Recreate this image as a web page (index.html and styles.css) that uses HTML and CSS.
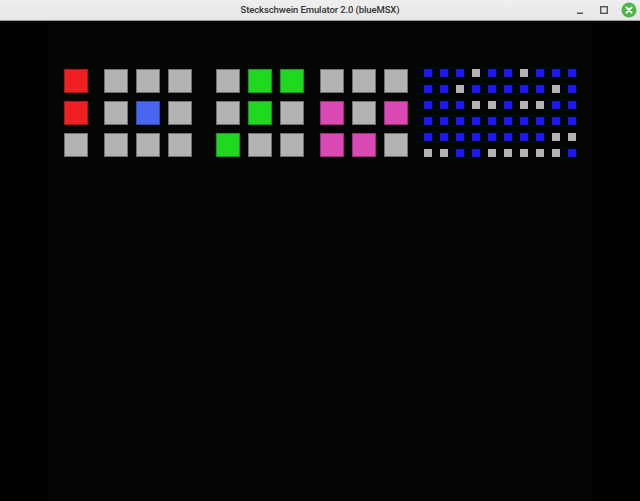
FILE: index.html
```html
<!DOCTYPE html>
<html>
<head>
<meta charset="utf-8">
<link rel="stylesheet" href="styles.css">
</head>
<body>
<div class="titlebar">
  <span class="title">Steckschwein Emulator 2.0 (blueMSX)</span>
  <div class="controls">
    <svg class="ctl" width="14" height="14" viewBox="0 0 14 14"><rect x="4" y="9.5" width="6" height="1.5" fill="#555"/></svg>
    <svg class="ctl" width="14" height="14" viewBox="0 0 14 14"><rect x="3.7" y="3.7" width="6.6" height="6.6" fill="none" stroke="#555" stroke-width="1.4"/></svg>
    <svg class="ctl close" width="16" height="16" viewBox="0 0 16 16"><circle cx="8" cy="8" r="7.5" fill="#4cb648"/><path d="M5.4 5.4 L10.6 10.6 M10.6 5.4 L5.4 10.6" stroke="#fff" stroke-width="2" stroke-linecap="round"/></svg>
  </div>
</div>
<div class="screen">
  <div class="border"></div>
  <div class="display">
    <div class="board">
      <div class="group g1"><div class="c r"></div><div class="c r"></div><div class="c"></div></div>
      <div class="group g3 sp16">
        <div class="c"></div><div class="c"></div><div class="c"></div>
        <div class="c"></div><div class="c b"></div><div class="c"></div>
        <div class="c"></div><div class="c"></div><div class="c"></div>
      </div>
      <div class="group g3 sp24">
        <div class="c"></div><div class="c g"></div><div class="c g"></div>
        <div class="c"></div><div class="c g"></div><div class="c"></div>
        <div class="c g"></div><div class="c"></div><div class="c"></div>
      </div>
      <div class="group g3 sp16">
        <div class="c"></div><div class="c"></div><div class="c"></div>
        <div class="c m"></div><div class="c"></div><div class="c m"></div>
        <div class="c m"></div><div class="c m"></div><div class="c"></div>
      </div>
      <div class="dots sp16">
        <i class="d"></i><i class="d"></i><i class="d"></i><i class="d w"></i><i class="d"></i><i class="d"></i><i class="d w"></i><i class="d"></i><i class="d"></i><i class="d"></i>
        <i class="d"></i><i class="d"></i><i class="d w"></i><i class="d"></i><i class="d"></i><i class="d"></i><i class="d"></i><i class="d"></i><i class="d w"></i><i class="d"></i>
        <i class="d"></i><i class="d"></i><i class="d"></i><i class="d w"></i><i class="d w"></i><i class="d"></i><i class="d w"></i><i class="d w"></i><i class="d"></i><i class="d"></i>
        <i class="d"></i><i class="d"></i><i class="d"></i><i class="d"></i><i class="d"></i><i class="d"></i><i class="d"></i><i class="d"></i><i class="d"></i><i class="d"></i>
        <i class="d"></i><i class="d"></i><i class="d"></i><i class="d"></i><i class="d"></i><i class="d"></i><i class="d"></i><i class="d"></i><i class="d w"></i><i class="d w"></i>
        <i class="d w"></i><i class="d w"></i><i class="d"></i><i class="d"></i><i class="d w"></i><i class="d w"></i><i class="d w"></i><i class="d w"></i><i class="d w"></i><i class="d"></i>
      </div>
    </div>
  </div>
  <div class="border"></div>
</div>
</body>
</html>
```

FILE: styles.css
```css
* { box-sizing: border-box; }
html, body { margin: 0; padding: 0; background: #010101; }
body { width: 640px; height: 501px; overflow: hidden; }

.titlebar {
  height: 21px;
  background: linear-gradient(#efefef, #e7e7e7);
  border-bottom: 1px solid #9a9a9a;
  display: flex;
  align-items: center;
  justify-content: center;
  position: relative;
}
.title {
  font-family: Roboto, "Noto Sans", sans-serif;
  font-size: 9.5px;
  font-weight: 500;
  letter-spacing: -0.1px;
  color: #333;
  margin-left: 0;
  margin-top: -1px;
}
.controls {
  position: absolute;
  right: 3px;
  top: 2px;
  display: flex;
  align-items: center;
  gap: 10px;
}
.ctl { display: block; }

.screen {
  display: flex;
  height: 480px;
}
.border { width: 48px; background: #010101; }
.display { width: 544px; background: #020502; }

.board {
  display: flex;
  align-items: flex-start;
  padding: 48px 0 0 16px;
}
.group { display: grid; gap: 8px; grid-auto-rows: 24px; }
.g1 { grid-template-columns: 24px; }
.g3 { grid-template-columns: repeat(3, 24px); }
.sp16 { margin-left: 16px; }
.sp24 { margin-left: 24px; }

.c {
  width: 24px; height: 24px;
  background: #b2b2b2;
  box-shadow: inset 0 0 0 1px rgba(60, 60, 60, 0.55);
}
.c.r { background: #ef2020; box-shadow: inset 0 0 0 1px rgba(90, 20, 20, 0.5); }
.c.b { background: #4a66f0; box-shadow: inset 0 0 0 1px rgba(30, 40, 100, 0.5); }
.c.g { background: #20d820; box-shadow: inset 0 0 0 1px rgba(20, 80, 20, 0.5); }
.c.m { background: #dc48b4; box-shadow: inset 0 0 0 1px rgba(90, 20, 70, 0.5); }

.dots {
  display: grid;
  grid-template-columns: repeat(10, 8px);
  grid-auto-rows: 8px;
  gap: 8px;
}
.d { display: block; width: 8px; height: 8px; background: #1a1af0; }
.d.w { background: #b4b4b4; }
```
